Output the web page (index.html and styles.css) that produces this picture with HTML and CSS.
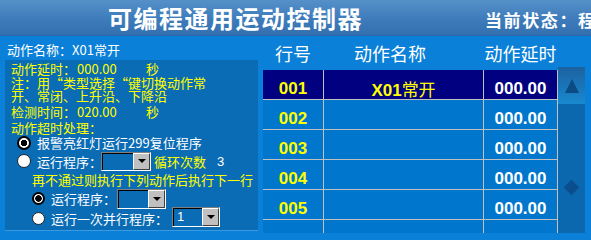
FILE: index.html
```html
<!DOCTYPE html>
<html lang="zh-CN">
<head>
<meta charset="utf-8">
<link rel="stylesheet" href="styles.css">
</head>
<body>
<div class="titlebar">
  <span class="title">可编程通用运动控制器</span>
  <span class="status">当前状态：程</span>
</div>
<div class="main">
  <div class="left">
    <div class="name">动作名称：X01常开</div>
    <div class="box">
      <div class="r r-delay"><span class="lbl">动作延时：</span><span class="val">000.00</span><span>秒</span></div>
      <div class="r r-note"><span class="nl">注：用“类型选择“键切换动作常</span><span class="nl">开、常闭、上升沿、下降沿</span></div>
      <div class="r r-check"><span class="lbl">检测时间：</span><span class="val">020.00</span><span>秒</span></div>
      <div class="r r-over">动作超时处理：</div>
      <div class="r r-opt1"><span class="radio on"></span><span class="wt">报警亮红灯运行299复位程序</span></div>
      <div class="r r-opt2"><span class="radio"></span><span class="wt">运行程序：</span><span class="combo c1"><span class="field"></span><span class="btn"><i></i></span></span><span class="loop">循环次数</span><span class="wt cnt">3</span></div>
      <div class="r r-again">再不通过则执行下列动作后执行下一行</div>
      <div class="r r-opt3"><span class="radio sm on"></span><span class="wt">运行程序：</span><span class="combo c2"><span class="field"></span><span class="btn"><i></i></span></span></div>
      <div class="r r-opt4"><span class="radio sm"></span><span class="wt">运行一次并行程序：</span><span class="combo c3"><span class="field">1</span><span class="btn"><i></i></span></span></div>
    </div>
  </div>
  <div class="table">
    <div class="thead">
      <div class="th k1">行号</div>
      <div class="th k2">动作名称</div>
      <div class="th k3">动作延时</div>
    </div>
    <div class="tr sel"><div class="td k1">001</div><div class="td k2">X01<span class="cjk">常开</span></div><div class="td k3">000.00</div></div>
    <div class="tr"><div class="td k1">002</div><div class="td k2"></div><div class="td k3">000.00</div></div>
    <div class="tr"><div class="td k1">003</div><div class="td k2"></div><div class="td k3">000.00</div></div>
    <div class="tr"><div class="td k1">004</div><div class="td k2"></div><div class="td k3">000.00</div></div>
    <div class="tr"><div class="td k1">005</div><div class="td k2"></div><div class="td k3">000.00</div></div>
    <div class="tr"><div class="td k1"></div><div class="td k2"></div><div class="td k3"></div></div>
  </div>
  <div class="scroll">
    <div class="up"><span class="tri"></span></div>
    <span class="thumb"></span>
  </div>
</div>
</body>
</html>
```
FILE: styles.css
```css
html, body {
  margin: 0;
  padding: 0;
}
body {
  width: 591px;
  height: 233px;
  overflow: hidden;
  background: #0a80d8;
  font-family: "Noto Sans CJK SC", sans-serif;
}
.titlebar {
  height: 36px;
  box-sizing: border-box;
  background: linear-gradient(#5590c8, #3d7bbb 55%, #3470b0);
  border-bottom: 1px solid #2d66a6;
  display: flex;
  align-items: center;
  white-space: nowrap;
  overflow: hidden;
  color: #fff;
}
.title {
  flex-shrink: 0;
  margin-left: 108px;
  font-size: 24px;
  font-weight: bold;
  letter-spacing: 1.5px;
  line-height: 34px;
}
.status {
  flex-shrink: 0;
  margin-left: 122px;
  padding-top: 3px;
  font-size: 17px;
  font-weight: bold;
  letter-spacing: 1.6px;
}
.main {
  display: flex;
  height: 197px;
}
.left {
  width: 258px;
  flex-shrink: 0;
}
.name {
  padding: 4px 0 0 7px;
  height: 20px;
  line-height: 20px;
  font-size: 13px;
  color: #fff;
}
.box {
  margin-left: 5px;
  width: 253px;
  height: 170px;
  box-sizing: border-box;
  padding-left: 6px;
  background: #0a6cb4;
  box-shadow: 0 1px 0 #3a9ae0;
  color: #ff0;
  font-size: 13px;
  white-space: nowrap;
}
.r {
  display: flex;
  align-items: center;
}
.lbl { width: 66px; }
.val { width: 69px; }
.r-delay { height: 16px; }
.r-note {
  flex-direction: column;
  align-items: flex-start;
  justify-content: center;
  height: 26px;
}
.nl {
  display: block;
  height: 13px;
  line-height: 13px;
}
.r-check { height: 18px; }
.r-over { height: 14px; }
.r-opt1 { height: 17px; padding-left: 6px; }
.r-opt2 { height: 20px; padding-left: 6px; }
.r-again { height: 16px; padding-left: 21px; }
.r-opt3 { height: 23px; padding-left: 21px; }
.r-opt4 { height: 17px; padding-left: 21px; }
.wt { color: #fff; }
.radio {
  width: 14px;
  height: 14px;
  box-sizing: border-box;
  border-radius: 50%;
  background: #fff;
  border: 1px solid #222;
  margin-right: 6px;
  flex-shrink: 0;
}
.radio.sm {
  width: 13px;
  height: 13px;
}
.radio.on {
  border: 2px solid #000;
  background: radial-gradient(circle, #000 0 3px, #fff 3.5px);
}
.combo {
  display: inline-flex;
  height: 19px;
  box-sizing: border-box;
  border-top: 1px solid #808080;
  border-left: 1px solid #808080;
  border-right: 1px solid #fff;
  border-bottom: 1px solid #fff;
  flex-shrink: 0;
}
.c1 { width: 50px; margin-left: -1px; }
.c2 { width: 49px; height: 20px; margin-left: 1px; }
.c3 { width: 48px; height: 20px; margin-left: 4px; margin-top: -3px; }
.field {
  flex: 1;
  border-top: 1px solid #000;
  border-left: 1px solid #000;
  background: #0a6cb4;
  color: #fff;
  font-family: "Liberation Sans", sans-serif;
  font-size: 13px;
  line-height: 16px;
  padding-left: 3px;
}
.btn {
  width: 17px;
  background: #c0c0c0;
  box-sizing: border-box;
  border-top: 1px solid #fff;
  border-left: 1px solid #fff;
  border-right: 1px solid #404040;
  border-bottom: 1px solid #404040;
  display: flex;
  align-items: center;
  justify-content: center;
}
.btn i {
  width: 0;
  height: 0;
  border-left: 4px solid transparent;
  border-right: 4px solid transparent;
  border-top: 4px solid #000;
}
.loop { margin-left: 3px; }
.cnt { margin-left: 11px; font-family: "Liberation Sans", sans-serif; }
.table {
  width: 295px;
  margin-left: 5px;
  flex-shrink: 0;
}
.thead {
  display: flex;
  height: 34px;
}
.th {
  font-size: 18px;
  color: #fff;
  line-height: 34px;
  text-align: center;
}
.thead .k1 { width: 60px; }
.thead .k2 { width: 160px; padding-right: 26px; box-sizing: border-box; }
.thead .k3 { width: 75px; }
.tr {
  display: flex;
  height: 30px;
  box-sizing: border-box;
  background: #0077cc;
  border-bottom: 1px solid #c0c0c0;
  border-right: 1px solid #c0c0c0;
}
.tr.sel { background: #000080; }
.td {
  box-sizing: border-box;
  padding-top: 9px;
  height: 29px;
  line-height: 20px;
  text-align: center;
  font-family: "Liberation Sans", "Noto Sans CJK SC", sans-serif;
  font-size: 17px;
  font-weight: bold;
  color: #ff0;
}
.td .cjk {
  font-family: "Noto Sans CJK SC", sans-serif;
  font-weight: normal;
}
.tr .k1 { width: 60px; }
.tr .k2 { width: 160px; border-left: 1px solid #c0c0c0; }
.tr .k3 { width: 74px; border-left: 1px solid #c0c0c0; color: #fff; }
.scroll {
  width: 27px;
  margin-top: 31px;
  background: #0b68ae;
  display: flex;
  flex-direction: column;
  align-items: center;
  flex-shrink: 0;
}
.up {
  width: 27px;
  height: 37px;
  background: linear-gradient(#1c62a0, #1a78bc 60%, #1a8ad0);
  display: flex;
  align-items: center;
  justify-content: center;
}
.tri {
  width: 0;
  height: 0;
  border-left: 7.5px solid transparent;
  border-right: 7.5px solid transparent;
  border-bottom: 14px solid #0b4a85;
}
.thumb {
  width: 11px;
  height: 11px;
  margin-top: 78px;
  background: #0b4e8e;
  transform: rotate(45deg);
}
```
